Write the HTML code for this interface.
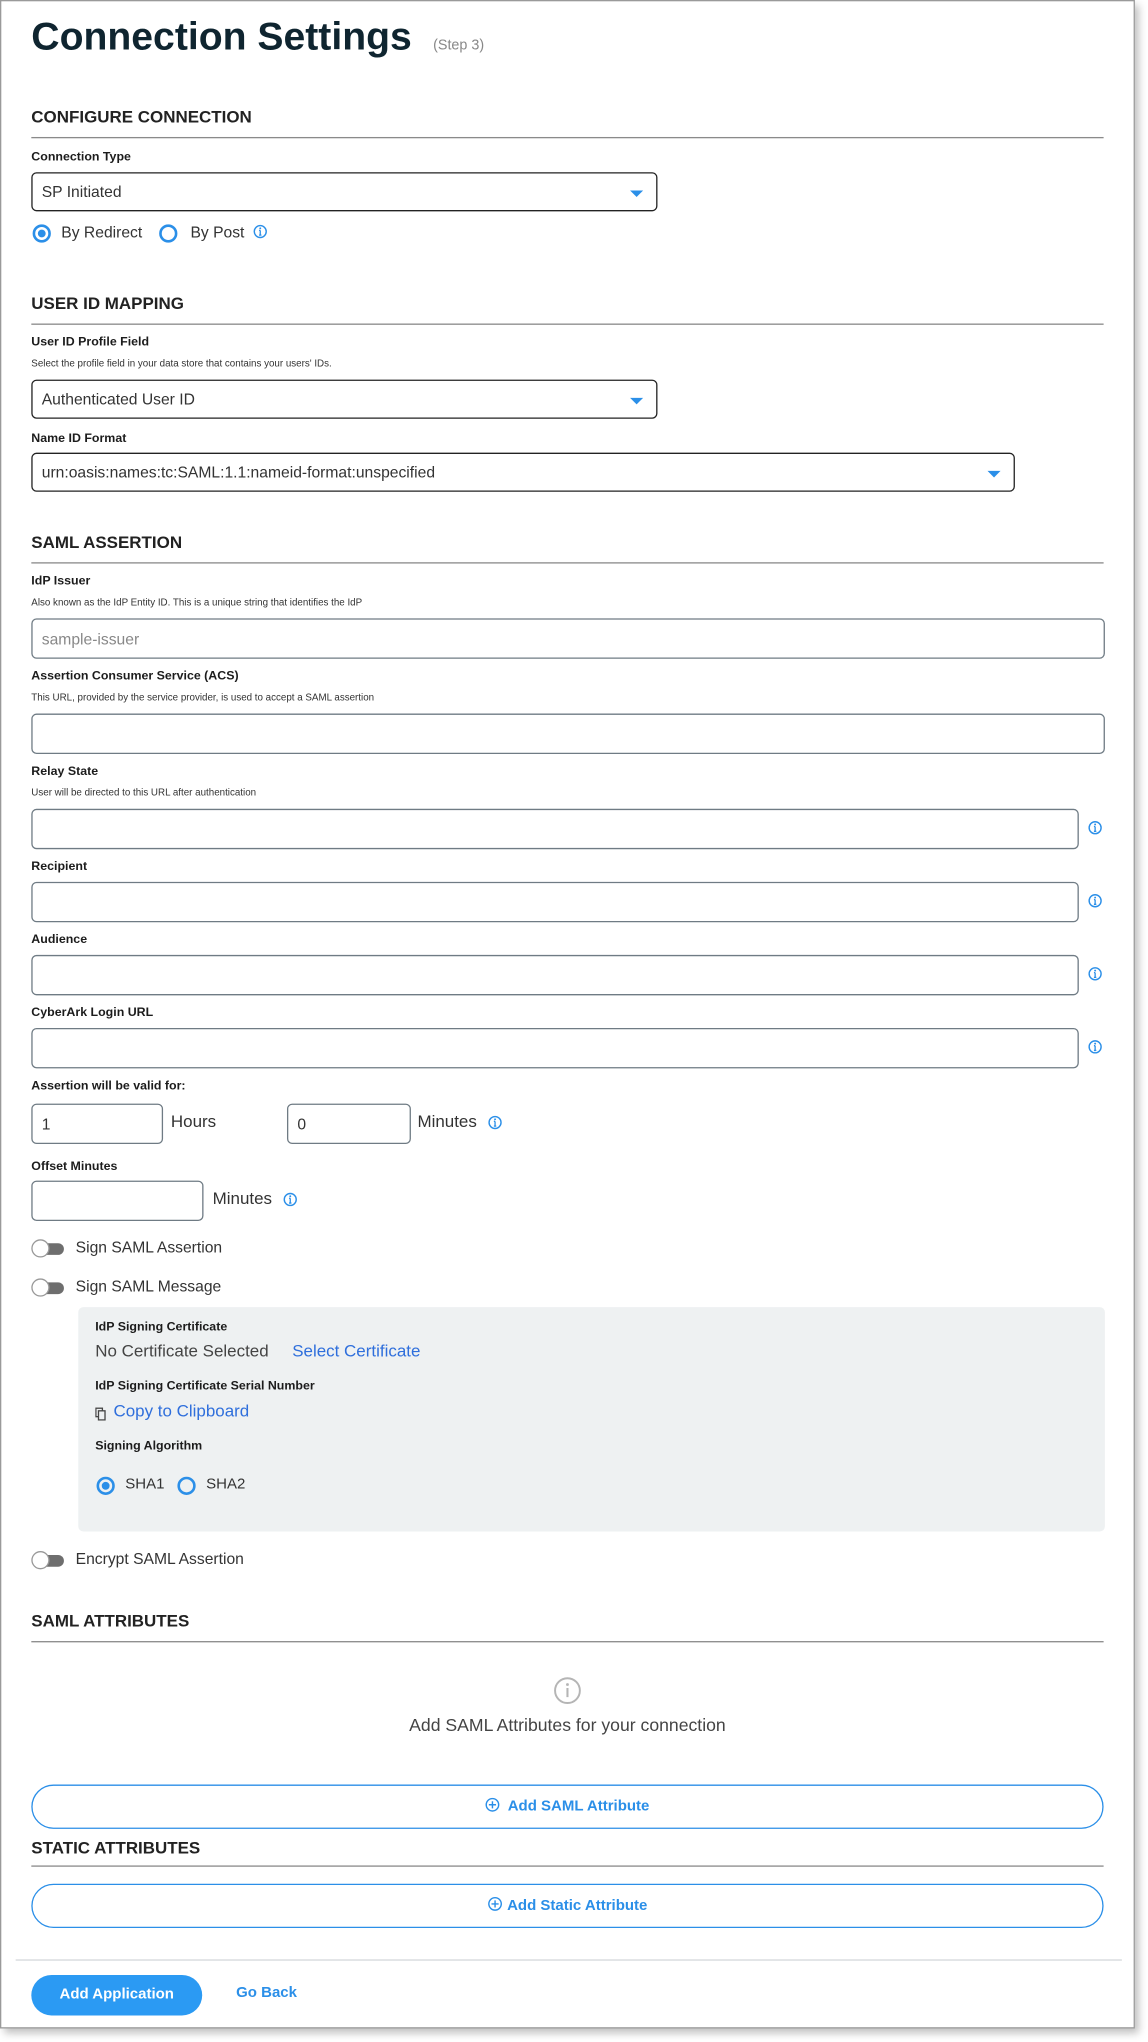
<!DOCTYPE html>
<html><head><meta charset="utf-8"><style>
html,body{margin:0;padding:0;background:#fff;width:1148px;height:2042px;overflow:hidden}
#w{position:absolute;left:0;top:0;width:880px;height:1565px;transform:scale(1.3045);transform-origin:0 0;font-family:"Liberation Sans",sans-serif;color:#222}
.panel{position:absolute;left:0;top:0;width:870px;height:1555px;border:1px solid #9a9a9a;box-shadow:3px 4px 6px rgba(0,0,0,.25);background:#fff;box-sizing:border-box}
.a{position:absolute;white-space:nowrap}
.h{font-size:13px;font-weight:bold;color:#222;line-height:16px}
.line{position:absolute;left:24px;width:822px;height:1px;background:#8a8a8a}
.lb{font-size:9.5px;font-weight:bold;color:#1c1c1c;line-height:12px}
.hp{font-size:7.5px;color:#333;line-height:10px}
.in{position:absolute;border:1px solid #6f7b84;border-radius:4px;box-sizing:border-box;background:#fff}
.sel{border-color:#222}
.tx{font-size:12px;color:#333;line-height:14px}
.arr{position:absolute;width:0;height:0;border-left:5px solid transparent;border-right:5px solid transparent;border-top:5px solid #2b8fe8}
.info{position:absolute;width:11px;height:11px}
.rad{position:absolute;width:14px;height:14px;border:2px solid #2b8fe8;border-radius:50%;box-sizing:border-box}
.rad.on::after{content:"";position:absolute;left:2px;top:2px;width:6px;height:6px;border-radius:50%;background:#2b8fe8}
.tog{position:absolute;width:26px;height:14px}
.tog .tr{position:absolute;left:6px;top:3px;width:19px;height:9px;border-radius:5px;background:#6e6e6e}
.tog .kn{position:absolute;left:0;top:0;width:14px;height:14px;border-radius:50%;background:#fff;border:1px solid #999;box-sizing:border-box}
.pill{position:absolute;left:24px;width:822px;height:34px;border:1px solid #2b8fe8;border-radius:17px;box-sizing:border-box;text-align:center;font-size:11.5px;font-weight:bold;color:#2b8fe8;line-height:32px}
.pill svg{vertical-align:middle;margin-right:6px;position:relative;top:-1px}
</style></head><body><div id="w">
<div class="panel"></div>
<div class="a" style="left:24px;top:11px;font-size:30px;font-weight:bold;color:#0f2530;line-height:36px">Connection Settings</div>
<div class="a" style="left:332px;top:29px;font-size:11px;color:#888">(Step 3)</div>

<div class="a h" style="left:24px;top:82px">CONFIGURE CONNECTION</div>
<div class="line" style="top:105px"></div>
<div class="a lb" style="left:24px;top:115px">Connection Type</div>
<div class="in sel" style="left:24px;top:132px;width:480px;height:30px"><div class="a tx" style="left:7px;top:7px">SP Initiated</div><div class="arr" style="left:458px;top:13px"></div></div>
<div class="rad on" style="left:25px;top:172px"></div><div class="a tx" style="left:47px;top:171px">By Redirect</div>
<div class="rad" style="left:122px;top:172px"></div><div class="a tx" style="left:146px;top:171px">By Post</div>
<svg class="info" style="left:194px;top:172px" viewBox="0 0 12 12"><circle cx="6" cy="6" r="5" fill="none" stroke="#2b8fe8" stroke-width="1.2"/><path d="M6 5v4M5 9h2M5 5h1" stroke="#2b8fe8" stroke-width="1.1" fill="none"/><circle cx="6" cy="3.3" r=".8" fill="#2b8fe8"/></svg>

<div class="a h" style="left:24px;top:225px">USER ID MAPPING</div>
<div class="line" style="top:248px"></div>
<div class="a lb" style="left:24px;top:257px">User ID Profile Field</div>
<div class="a hp" style="left:24px;top:274px">Select the profile field in your data store that contains your users' IDs.</div>
<div class="in sel" style="left:24px;top:291px;width:480px;height:30px"><div class="a tx" style="left:7px;top:7px">Authenticated User ID</div><div class="arr" style="left:458px;top:13px"></div></div>
<div class="a lb" style="left:24px;top:331px">Name ID Format</div>
<div class="in sel" style="left:24px;top:347px;width:754px;height:30px"><div class="a tx" style="left:7px;top:7px">urn:oasis:names:tc:SAML:1.1:nameid-format:unspecified</div><div class="arr" style="left:732px;top:13px"></div></div>

<div class="a h" style="left:24px;top:408px">SAML ASSERTION</div>
<div class="line" style="top:431px"></div>
<div class="a lb" style="left:24px;top:440px">IdP Issuer</div>
<div class="a hp" style="left:24px;top:457px">Also known as the IdP Entity ID. This is a unique string that identifies the IdP</div>
<div class="in" style="left:24px;top:474px;width:823px;height:31px"><div class="a tx" style="left:7px;top:8px;color:#888">sample-issuer</div></div>
<div class="a lb" style="left:24px;top:513px">Assertion Consumer Service (ACS)</div>
<div class="a hp" style="left:24px;top:530px">This URL, provided by the service provider, is used to accept a SAML assertion</div>
<div class="in" style="left:24px;top:547px;width:823px;height:31px"></div>
<div class="a lb" style="left:24px;top:586px">Relay State</div>
<div class="a hp" style="left:24px;top:603px">User will be directed to this URL after authentication</div>
<div class="in" style="left:24px;top:620px;width:803px;height:31px"></div>
<div class="a lb" style="left:24px;top:659px">Recipient</div>
<div class="in" style="left:24px;top:676px;width:803px;height:31px"></div>
<div class="a lb" style="left:24px;top:715px">Audience</div>
<div class="in" style="left:24px;top:732px;width:803px;height:31px"></div>
<div class="a lb" style="left:24px;top:771px">CyberArk Login URL</div>
<div class="in" style="left:24px;top:788px;width:803px;height:31px"></div>
<svg class="info" style="left:834px;top:629px" viewBox="0 0 12 12"><circle cx="6" cy="6" r="5" fill="none" stroke="#2b8fe8" stroke-width="1.2"/><path d="M6 5v4M5 9h2M5 5h1" stroke="#2b8fe8" stroke-width="1.1" fill="none"/><circle cx="6" cy="3.3" r=".8" fill="#2b8fe8"/></svg>
<svg class="info" style="left:834px;top:685px" viewBox="0 0 12 12"><circle cx="6" cy="6" r="5" fill="none" stroke="#2b8fe8" stroke-width="1.2"/><path d="M6 5v4M5 9h2M5 5h1" stroke="#2b8fe8" stroke-width="1.1" fill="none"/><circle cx="6" cy="3.3" r=".8" fill="#2b8fe8"/></svg>
<svg class="info" style="left:834px;top:741px" viewBox="0 0 12 12"><circle cx="6" cy="6" r="5" fill="none" stroke="#2b8fe8" stroke-width="1.2"/><path d="M6 5v4M5 9h2M5 5h1" stroke="#2b8fe8" stroke-width="1.1" fill="none"/><circle cx="6" cy="3.3" r=".8" fill="#2b8fe8"/></svg>
<svg class="info" style="left:834px;top:797px" viewBox="0 0 12 12"><circle cx="6" cy="6" r="5" fill="none" stroke="#2b8fe8" stroke-width="1.2"/><path d="M6 5v4M5 9h2M5 5h1" stroke="#2b8fe8" stroke-width="1.1" fill="none"/><circle cx="6" cy="3.3" r=".8" fill="#2b8fe8"/></svg>

<div class="a lb" style="left:24px;top:827px">Assertion will be valid for:</div>
<div class="in" style="left:24px;top:846px;width:101px;height:31px"><div class="a tx" style="left:7px;top:8px">1</div></div>
<div class="a tx" style="left:131px;top:853px;font-size:13px">Hours</div>
<div class="in" style="left:220px;top:846px;width:95px;height:31px"><div class="a tx" style="left:7px;top:8px">0</div></div>
<div class="a tx" style="left:320px;top:853px;font-size:13px">Minutes</div>
<svg class="info" style="left:374px;top:855px" viewBox="0 0 12 12"><circle cx="6" cy="6" r="5" fill="none" stroke="#2b8fe8" stroke-width="1.2"/><path d="M6 5v4M5 9h2M5 5h1" stroke="#2b8fe8" stroke-width="1.1" fill="none"/><circle cx="6" cy="3.3" r=".8" fill="#2b8fe8"/></svg>
<div class="a lb" style="left:24px;top:889px">Offset Minutes</div>
<div class="in" style="left:24px;top:905px;width:132px;height:31px"></div>
<div class="a tx" style="left:163px;top:912px;font-size:13px">Minutes</div>
<svg class="info" style="left:217px;top:914px" viewBox="0 0 12 12"><circle cx="6" cy="6" r="5" fill="none" stroke="#2b8fe8" stroke-width="1.2"/><path d="M6 5v4M5 9h2M5 5h1" stroke="#2b8fe8" stroke-width="1.1" fill="none"/><circle cx="6" cy="3.3" r=".8" fill="#2b8fe8"/></svg>

<div class="tog" style="left:24px;top:950px"><div class="tr"></div><div class="kn"></div></div>
<div class="a tx" style="left:58px;top:949px">Sign SAML Assertion</div>
<div class="tog" style="left:24px;top:980px"><div class="tr"></div><div class="kn"></div></div>
<div class="a tx" style="left:58px;top:979px">Sign SAML Message</div>

<div class="a" style="left:60px;top:1002px;width:787px;height:172px;background:#eef1f2;border-radius:4px"></div>
<div class="a lb" style="left:73px;top:1012px">IdP Signing Certificate</div>
<div class="a tx" style="left:73px;top:1029px;font-size:13px;color:#444">No Certificate Selected</div>
<div class="a tx" style="left:224px;top:1029px;font-size:13px;color:#2f6fdc">Select Certificate</div>
<div class="a lb" style="left:73px;top:1057px">IdP Signing Certificate Serial Number</div>
<svg class="a" style="left:73px;top:1079px" width="9" height="10" viewBox="0 0 9 10"><rect x="0.5" y="0.5" width="5" height="6.5" fill="none" stroke="#444"/><rect x="2.5" y="2.5" width="5" height="7" fill="#eef1f2" stroke="#444"/></svg>
<div class="a tx" style="left:87px;top:1075px;font-size:13px;color:#2f6fdc">Copy to Clipboard</div>
<div class="a lb" style="left:73px;top:1103px">Signing Algorithm</div>
<div class="rad on" style="left:74px;top:1132px"></div><div class="a tx" style="left:96px;top:1131px;font-size:11.5px">SHA1</div>
<div class="rad" style="left:136px;top:1132px"></div><div class="a tx" style="left:158px;top:1131px;font-size:11.5px">SHA2</div>

<div class="tog" style="left:24px;top:1189px"><div class="tr"></div><div class="kn"></div></div>
<div class="a tx" style="left:58px;top:1188px">Encrypt SAML Assertion</div>

<div class="a h" style="left:24px;top:1235px">SAML ATTRIBUTES</div>
<div class="line" style="top:1258px"></div>
<svg class="a" style="left:424px;top:1285px" width="22" height="22" viewBox="0 0 22 22"><circle cx="11" cy="11" r="9.5" fill="none" stroke="#b5b5b5" stroke-width="1.5"/><path d="M11 9v7" stroke="#b5b5b5" stroke-width="1.6"/><circle cx="11" cy="6.3" r="1.1" fill="#b5b5b5"/></svg>
<div class="a tx" style="left:0;width:870px;text-align:center;top:1316px;font-size:13.5px;color:#444">Add SAML Attributes for your connection</div>
<div class="pill" style="top:1368px"><svg width="11" height="11" viewBox="0 0 12 12"><circle cx="6" cy="6" r="5.2" fill="none" stroke="#2b8fe8" stroke-width="1.2"/><path d="M6 3v6M3 6h6" stroke="#2b8fe8" stroke-width="1.2"/></svg>Add SAML Attribute</div>
<div class="a h" style="left:24px;top:1409px">STATIC ATTRIBUTES</div>
<div class="line" style="top:1430px"></div>
<div class="pill" style="top:1444px"><svg width="11" height="11" viewBox="0 0 12 12" style="margin-right:4px"><circle cx="6" cy="6" r="5.2" fill="none" stroke="#2b8fe8" stroke-width="1.2"/><path d="M6 3v6M3 6h6" stroke="#2b8fe8" stroke-width="1.2"/></svg>Add Static Attribute</div>

<div class="a" style="left:12px;top:1502px;width:848px;height:1px;background:#d4d8db"></div>
<div class="a" style="left:24px;top:1514px;width:131px;height:31px;border-radius:16px;background:#2b9af3;color:#fff;font-size:11.5px;font-weight:bold;text-align:center;line-height:31px">Add Application</div>
<div class="a" style="left:181px;top:1522px;font-size:11.5px;font-weight:bold;color:#2b8fe8">Go Back</div>
</div></body></html>
